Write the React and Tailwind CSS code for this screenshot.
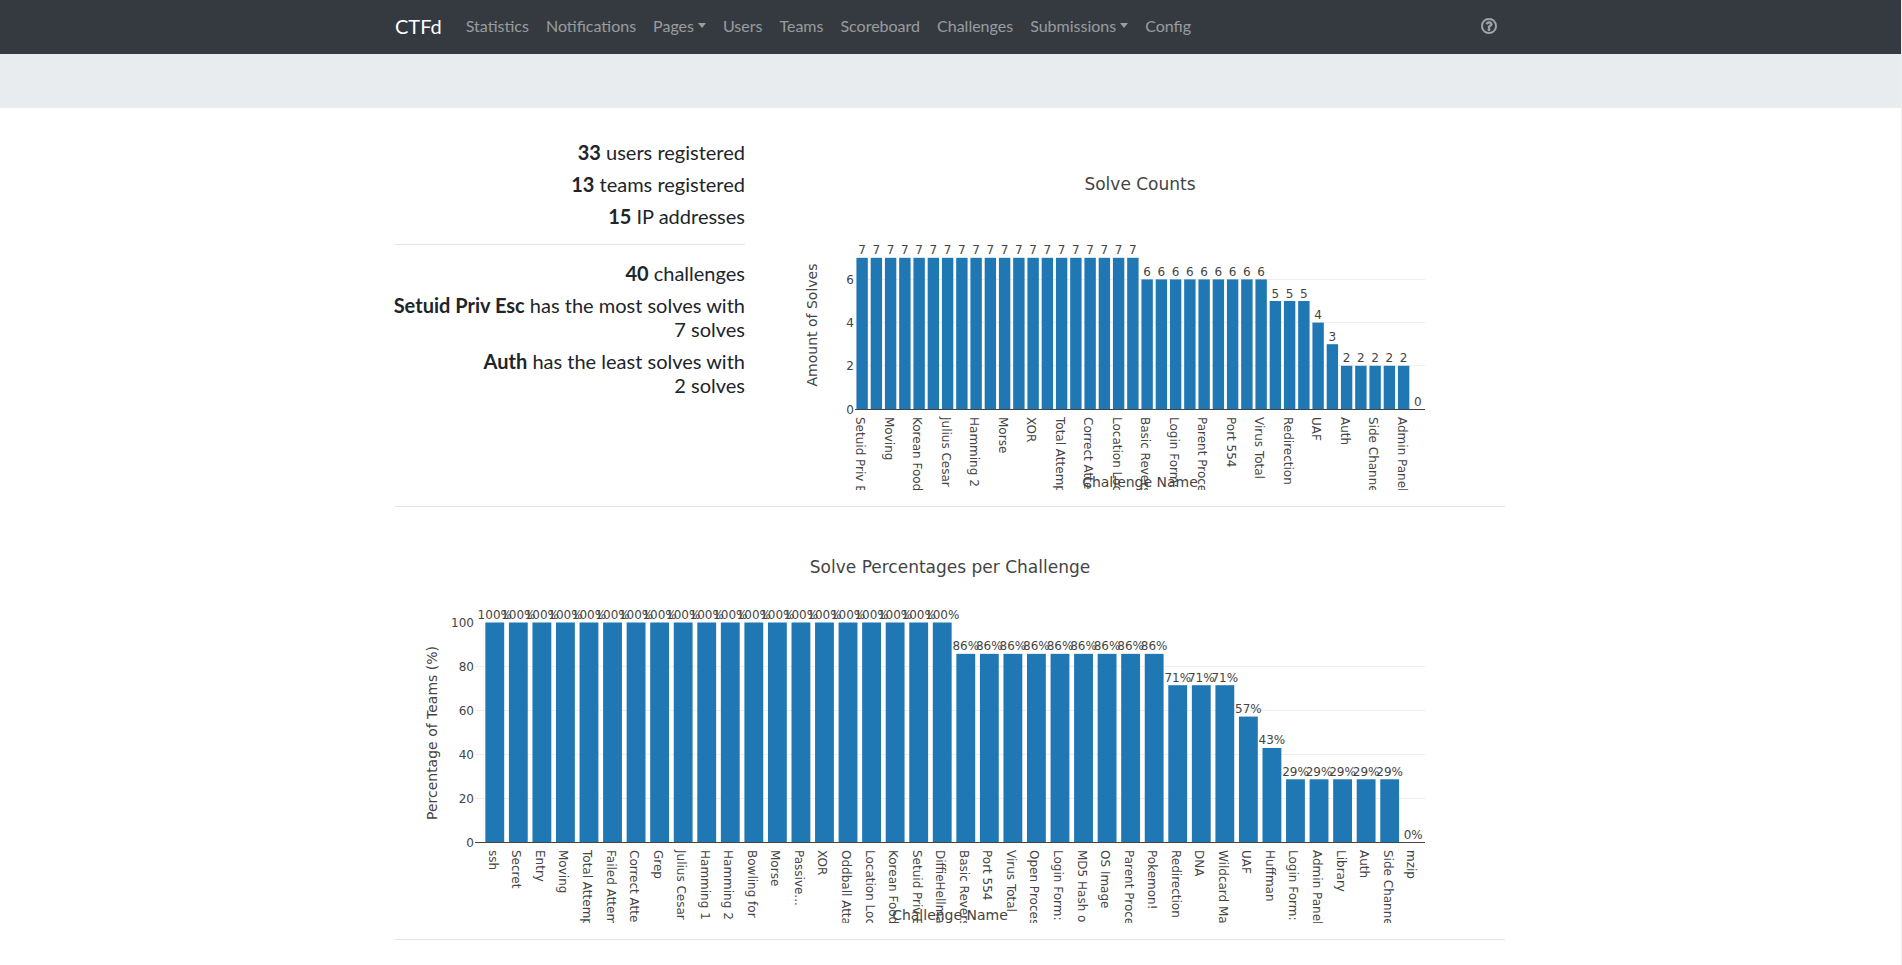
import React from "react";
import { FaRegQuestionCircle } from "react-icons/fa";

const repeat = (n, v) => Array.from({ length: n }, () => v);

const NAV = [
  { label: "Statistics" },
  { label: "Notifications" },
  { label: "Pages", menu: true },
  { label: "Users" },
  { label: "Teams" },
  { label: "Scoreboard" },
  { label: "Challenges" },
  { label: "Submissions", menu: true },
  { label: "Config" },
];

const COUNTS = [...repeat(20, 7), ...repeat(9, 6), 5, 5, 5, 4, 3, ...repeat(5, 2), 0];

// Every second challenge is labelled on the narrow chart.
const COUNT_NAMES = [
  "Setuid Priv Esc", "Moving", "Korean Food", "Julius Cesar", "Hamming 2",
  "Morse", "XOR", "Total Attempts", "Correct Attempts", "Location Location",
  "Basic Reversing", "Login Form: 1", "Parent Process", "Port 554", "Virus Total",
  "Redirection", "UAF", "Auth", "Side Channel", "Admin Panel",
];

const PERCENTS = COUNTS.map((n) => (n / 7) * 100);

const PERCENT_NAMES = [
  "ssh", "Secret", "Entry", "Moving", "Total Attempts", "Failed Attempts",
  "Correct Attempts", "Grep", "Julius Cesar", "Hamming 1", "Hamming 2",
  "Bowling for", "Morse", "Passive...", "XOR", "Oddball Attack",
  "Location Location", "Korean Food", "Setuid Priv Esc", "DiffieHellman",
  "Basic Reversing", "Port 554", "Virus Total", "Open Process", "Login Form: 2",
  "MD5 Hash of", "OS Image", "Parent Process", "Pokemon!", "Redirection",
  "DNA", "Wildcard Mask", "UAF", "Huffman", "Login Form: 1", "Admin Panel",
  "Library", "Auth", "Side Channel", "mzip",
];

function BarChart({
  width, height, title, titleY, xTitle, xTitleY, yTitle, yTitleX, yTitleY,
  axisLeft, axisRight, firstSlot, baseY, unit, ticks, gridMax, values, format, names, nameStep,
}) {
  const pitch = (axisRight - firstSlot) / values.length;
  const center = (i) => firstSlot + pitch * (i + 0.5);
  const middle = (axisLeft + axisRight) / 2;
  return (
    <svg
      role="img"
      aria-label={title}
      viewBox={`0 0 ${width} ${height}`}
      className="block h-auto w-full overflow-hidden fill-[#444] font-['Verdana','DejaVu_Sans',sans-serif] text-[12px]"
    >
      <text x={middle} y={titleY} textAnchor="middle" className="text-[17px]">{title}</text>
      {ticks.map((t) => (
        <g key={t}>
          {t > 0 && t <= gridMax && (
            <rect x={axisLeft} y={Math.floor(baseY - t * unit)} width={axisRight - axisLeft} height="1" className="fill-[#eee]" />
          )}
          <text x={axisLeft - 1} y={Math.floor(baseY - t * unit + 5)} textAnchor="end">{t}</text>
        </g>
      ))}
      {values.map((v, i) => (
        <rect key={i} x={center(i) - pitch * 0.4} y={baseY - v * unit} width={pitch * 0.8} height={v * unit} className="fill-[#1f77b4]" />
      ))}
      <rect x={axisLeft} y={baseY} width={axisRight - axisLeft} height="1" />
      {values.map((v, i) => (
        <text key={i} x={center(i)} y={Math.floor(baseY - v * unit - 3)} textAnchor="middle">{format(v)}</text>
      ))}
      {names.map((name, i) => (
        <text key={i} transform={`translate(${center(i * nameStep) - 6} ${baseY + 8}) rotate(90)`}>{name}</text>
      ))}
      <text x={middle} y={xTitleY} textAnchor="middle" className="text-[14px]">{xTitle}</text>
      <text transform={`translate(${yTitleX} ${yTitleY}) rotate(-90)`} textAnchor="middle" className="text-[14px]">{yTitle}</text>
    </svg>
  );
}

function Stat({ value, children }) {
  return (
    <h5 className="-ml-4 mb-2 text-[20px] leading-6">
      <b className="font-bold">{value}</b> {children}
    </h5>
  );
}

export default function App() {
  return (
    <div className="min-h-screen border-r border-[#eee] bg-white font-['Lato',sans-serif] text-[#212529]">
      <nav className="bg-[#343a40]">
        <div className="mx-auto flex h-[54px] max-w-[1141px] items-center pr-4 pb-0.5 pl-[15px]">
          <a href="#" className="mr-4 text-[20px] leading-[30px] text-white">CTFd</a>
          <ul className="flex gap-px">
            {NAV.map(({ label, menu }) => (
              <li key={label}>
                <a href="#" className="flex items-center px-2 text-[16px] leading-6 text-white/50">
                  {label}
                  {menu && <span className="mb-0.5 ml-1 border-x-4 border-t-[5px] border-x-transparent" />}
                </a>
              </li>
            ))}
          </ul>
          <a href="#" aria-label="Help" className="ml-auto px-2 text-[16px] text-white/50">
            <FaRegQuestionCircle strokeWidth="16" />
          </a>
        </div>
      </nav>
      <header className="h-[54px] bg-[#e9ecef]" />

      <main className="mx-auto max-w-[1141px] pt-8 pr-4 pl-[15px]">
        <section className="flex gap-[30px]">
          <div className="w-[350px] shrink-0 text-right">
            <Stat value="33">users registered</Stat>
            <Stat value="13">teams registered</Stat>
            <Stat value="15">IP addresses</Stat>
            <hr className="my-4 border-black/10" />
            <Stat value="40">challenges</Stat>
            <Stat value="Setuid Priv Esc">has the most solves with <br />7 solves</Stat>
            <Stat value="Auth">has the least solves with <br />2 solves</Stat>
          </div>
          <div className="min-w-0 flex-1">
            <BarChart
              width={730} height={350}
              title="Solve Counts" titleY={50}
              xTitle="Challenge Name" xTitleY={347}
              yTitle="Amount of Solves" yTitleX={42} yTitleY={185}
              axisLeft={80} axisRight={650} firstSlot={80}
              baseY={269} unit={21.6} ticks={[0, 2, 4, 6]} gridMax={6}
              values={COUNTS} format={(v) => v}
              names={COUNT_NAMES} nameStep={2}
            />
          </div>
        </section>
        <hr className="my-4 border-black/10" />
        <section>
          <BarChart
            width={1110} height={400}
            title="Solve Percentages per Challenge" titleY={50}
            xTitle="Challenge Name" xTitleY={397}
            yTitle="Percentage of Teams (%)" yTitleX={42} yTitleY={210}
            axisLeft={80} axisRight={1030} firstSlot={88}
            baseY={319} unit={2.195} ticks={[0, 20, 40, 60, 80, 100]} gridMax={80}
            values={PERCENTS} format={(v) => `${Math.round(v)}%`}
            names={PERCENT_NAMES} nameStep={1}
          />
        </section>
        <hr className="mt-4 border-black/10" />
      </main>
    </div>
  );
}
